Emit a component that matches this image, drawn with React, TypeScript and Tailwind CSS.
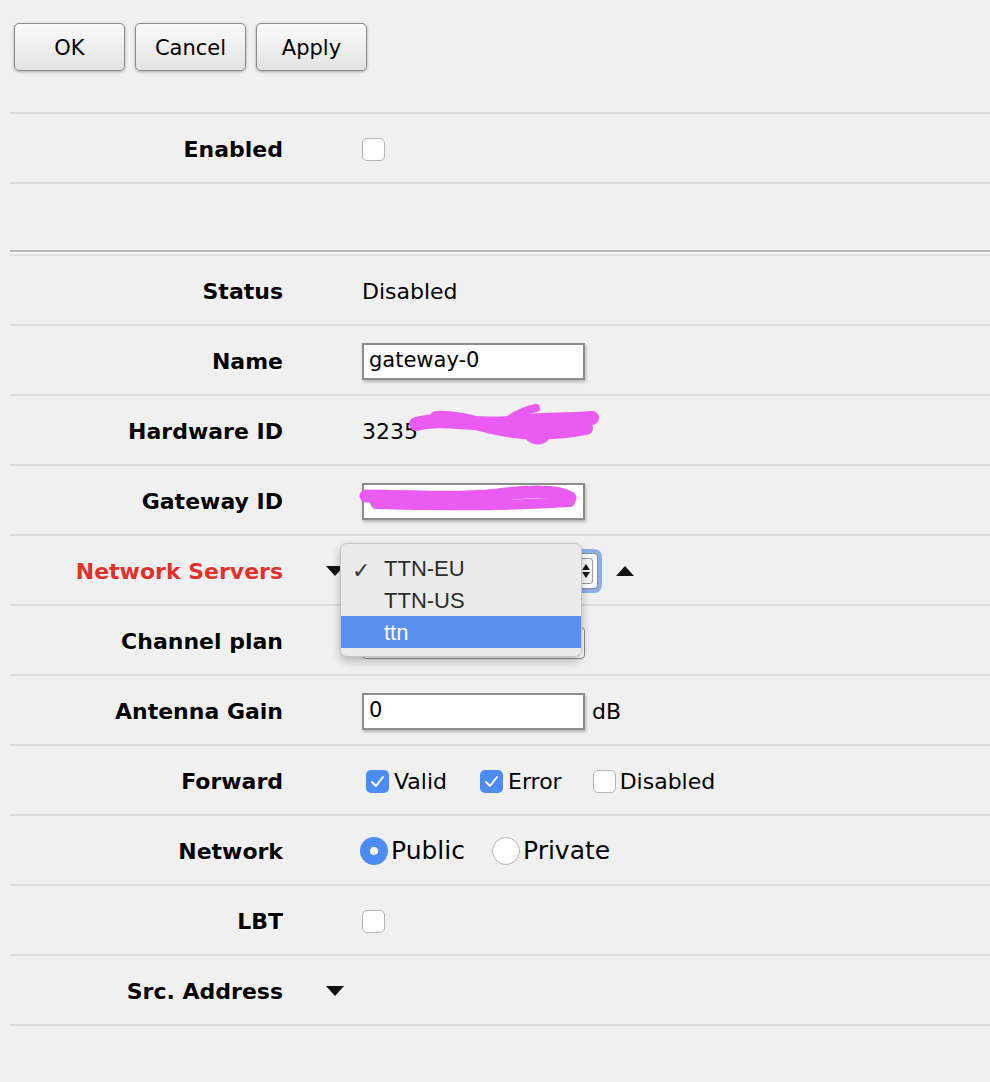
import React from 'react'

const font = "font-['DejaVu_Sans',Verdana,sans-serif]"

const Triangle = ({ up = false }: { up?: boolean }) => (
  <svg width="18" height="10" viewBox="0 0 18 10" className="block">
    {up ? <path d="M0 10 L9 0 L18 10 Z" fill="#111" /> : <path d="M0 0 L18 0 L9 10 Z" fill="#111" />}
  </svg>
)

const Checkbox = ({ checked = false }: { checked?: boolean }) =>
  checked ? (
    <span className="flex h-[23px] w-[23px] items-center justify-center rounded-[5px] bg-[#4d8cf5]">
      <svg width="15" height="13" viewBox="0 0 15 13">
        <path d="M2 7 L6 11 L13 2" fill="none" stroke="#fff" strokeWidth="2" strokeLinecap="round" strokeLinejoin="round" />
      </svg>
    </span>
  ) : (
    <span className="block h-[23px] w-[23px] rounded-[5px] border border-[#b4b4b4] bg-white" />
  )

const TextBox = ({ value, className = '' }: { value: string; className?: string }) => (
  <div
    className={`flex h-[37px] w-[223px] items-center border-2 border-[#8d8d8d] bg-white px-[5px] text-[21px] shadow-[1px_2px_3px_rgba(0,0,0,0.25)] ${className}`}
  >
    {value}
  </div>
)

const Row = ({
  label,
  red = false,
  expander = false,
  children,
}: {
  label: string
  red?: boolean
  expander?: boolean
  children?: React.ReactNode
}) => (
  <div className="flex h-[70px] items-center border-b-2 border-[#dcdcdc] pt-[2px]">
    <div
      className={`w-[273px] text-right text-[22px] font-bold [text-shadow:0_1px_1px_#fff] ${red ? 'text-[#e3302a]' : 'text-black'}`}
    >
      {label}
    </div>
    <div className="w-[79px] pl-[43px]">{expander && <Triangle />}</div>
    <div className="relative flex flex-1 items-center text-[22px] text-black">{children}</div>
  </div>
)

const Button = ({ children }: { children: React.ReactNode }) => (
  <button className="h-[48px] w-[111px] rounded-[5px] border-[1.5px] border-[#8a8a8a] bg-gradient-to-b from-[#fbfbfb] to-[#e2e2e2] pt-[4px] text-[21px] text-black shadow-[0_1px_3px_rgba(0,0,0,0.3)]">
    {children}
  </button>
)

export default function App() {
  return (
    <div className={`min-h-[1082px] w-full bg-[#f0f0f0] ${font}`}>
      <div className="flex gap-[10px] pl-[14px] pt-[23px]">
        <Button>OK</Button>
        <Button>Cancel</Button>
        <Button>Apply</Button>
      </div>

      <div className="ml-[10px] mt-[41px]">
        <div className="border-t-2 border-[#dcdcdc]">
          <Row label="Enabled">
            <Checkbox />
          </Row>
        </div>
        <div className="h-[66px]" />
        <div className="h-[2px] bg-[#b9b9b9]" />
        <div className="h-[2px] bg-[#f8f8f8]" />
        <div className="h-[2px] bg-[#e2e2e2]" />

        <Row label="Status">Disabled</Row>
        <Row label="Name">
          <TextBox value="gateway-0" />
        </Row>
        <Row label="Hardware ID">
          <span>3235</span>
          <svg width="200" height="50" viewBox="0 0 200 50" className="absolute left-[44px] top-[-13px]">
            <g fill="none" stroke="#ea5cf1" strokeLinecap="round" strokeLinejoin="round">
              <path d="M10 22 C40 14 70 26 110 20 C140 16 170 18 186 16" strokeWidth="14" />
              <path d="M30 16 C60 14 90 30 120 30 C150 32 170 28 180 26" strokeWidth="14" />
              <path d="M100 20 C110 12 120 8 130 6" strokeWidth="8" />
              <path d="M120 30 C125 38 132 40 138 36" strokeWidth="9" />
            </g>
          </svg>
        </Row>
        <Row label="Gateway ID">
          <TextBox value="c" />
          <svg width="232" height="30" viewBox="0 0 232 30" className="absolute left-[-6px] top-[1px]">
            <g fill="none" stroke="#ea5cf1" strokeLinecap="round">
              <path d="M10 12 C60 12 110 16 150 10 C185 6 205 8 214 14" strokeWidth="13" />
              <path d="M20 20 C80 22 150 22 214 18" strokeWidth="10" />
              <ellipse cx="212" cy="15" rx="6" ry="4" strokeWidth="4" />
            </g>
          </svg>
        </Row>
        <Row label="Network Servers" red expander>
          <div className="h-[36px] w-[236px] rounded-[4px] border border-[#8d8d8d] bg-white ring-[4px] ring-[#6f9fef]/80">
            <div className="flex h-full items-center justify-end pr-[4px]">
              <span className="flex h-[26px] w-[14px] flex-col items-center justify-center gap-[2px] rounded-[3px] border border-[#999] bg-[#f6f6f6]">
                <svg width="8" height="6" viewBox="0 0 8 6">
                  <path d="M0 6 L4 0 L8 6 Z" fill="#111" />
                </svg>
                <svg width="8" height="6" viewBox="0 0 8 6">
                  <path d="M0 0 L8 0 L4 6 Z" fill="#111" />
                </svg>
              </span>
            </div>
          </div>
          <div className="ml-[18px]">
            <Triangle up />
          </div>
          <div className="absolute left-[-22px] top-[-10px] z-10 w-[242px] rounded-[7px] border border-[#c4c4c4] bg-[#ebebeb] py-[8px] font-['Liberation_Sans',Arial,sans-serif] text-[22px] text-[#2c2c2c] shadow-[0_4px_10px_rgba(0,0,0,0.25)]">
            <div className="relative flex h-[32px] items-center pl-[43px]">
              <span className="absolute left-[11px] top-[2px] text-[#333]">✓</span>
              TTN-EU
            </div>
            <div className="flex h-[32px] items-center pl-[43px]">TTN-US</div>
            <div className="flex h-[32px] items-center bg-[#5a8ff0] pl-[43px] text-white">ttn</div>
          </div>
        </Row>
        <Row label="Channel plan">
          <div className="mt-[4px] h-[32px] w-[223px] rounded-[4px] border border-[#8d8d8d] bg-white" />
        </Row>
        <Row label="Antenna Gain">
          <TextBox value="0" />
          <span className="ml-[7px]">dB</span>
        </Row>
        <Row label="Forward">
          <div className="ml-[4px] flex items-center">
            <Checkbox checked />
            <span className="ml-[5px]">Valid</span>
            <span className="ml-[33px]">
              <Checkbox checked />
            </span>
            <span className="ml-[5px]">Error</span>
            <span className="ml-[31px]">
              <Checkbox />
            </span>
            <span className="ml-[4px]">Disabled</span>
          </div>
        </Row>
        <Row label="Network">
          <div className="ml-[-2px] flex items-center text-[25px]">
            <span className="flex h-[28px] w-[28px] items-center justify-center rounded-full bg-[#4d8cf5]">
              <span className="h-[8px] w-[8px] rounded-full bg-white" />
            </span>
            <span className="ml-[3px]">Public</span>
            <span className="ml-[27px] h-[28px] w-[28px] rounded-full border border-[#b4b4b4] bg-white" />
            <span className="ml-[3px]">Private</span>
          </div>
        </Row>
        <Row label="LBT">
          <Checkbox />
        </Row>
        <Row label="Src. Address" expander />
      </div>
    </div>
  )
}
